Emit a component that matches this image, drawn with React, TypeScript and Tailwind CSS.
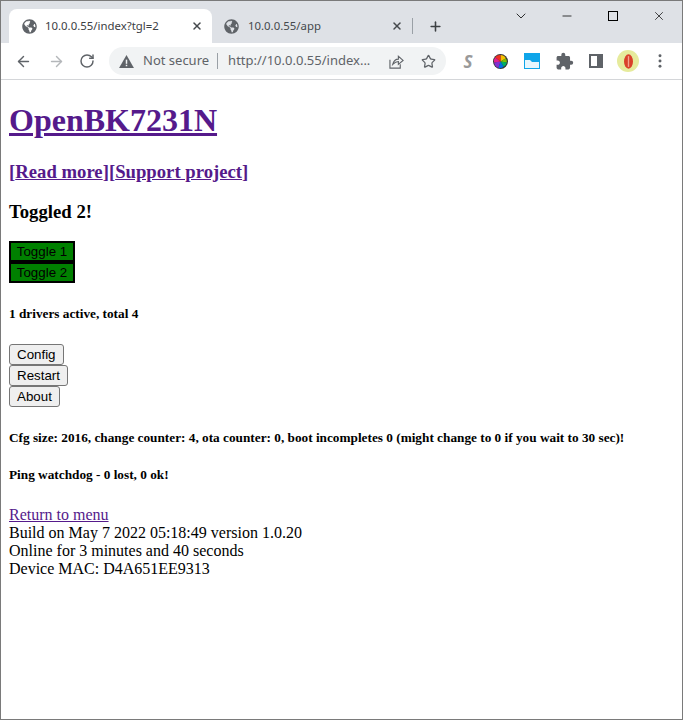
import { ArrowLeft, ArrowRight, RotateCw, Star, X, Plus, ChevronDown, Minus } from 'lucide-react'
import { FaGlobeAmericas } from 'react-icons/fa'
import { MdExtension } from 'react-icons/md'

const chrome = { fontFamily: '"Noto Sans", sans-serif' }

function Tab({ title, active }: { title: string; active?: boolean }) {
  return (
    <div className={`flex items-center h-[34px] pr-[9px] ${active ? 'w-[203px] pl-[13px] bg-white rounded-t-lg text-[#3c4043]' : 'w-[200px] pl-[12px] text-[#45494d]'}`}>
      <FaGlobeAmericas className="w-[15px] h-[15px] text-[#5f6368]" />
      <span className={`text-[11.4px] flex-1 ${active ? 'ml-[8px]' : 'ml-[9px]'}`}>{title}</span>
      <X className="w-[12px] h-[12px] text-[#45494d]" strokeWidth={3} />
    </div>
  )
}

function ExtensionIcons() {
  return (
    <div className="flex items-center ml-[12px]">
      <span className="w-[20px] text-center text-[17px] font-bold italic text-[#9a9a9a] leading-none">S</span>
      <svg viewBox="0 0 14 14" className="w-[15px] h-[15px] ml-[15px]">
        <circle cx="7" cy="7" r="7" fill="#333" />
        <path d="M7 7 L7 1 A6 6 0 0 1 12 4Z" fill="#f5c000" />
        <path d="M7 7 L12 4 A6 6 0 0 1 13 8Z" fill="#7ac000" />
        <path d="M7 7 L13 8 A6 6 0 0 1 10 12Z" fill="#00b060" />
        <path d="M7 7 L10 12 A6 6 0 0 1 5 13Z" fill="#0070e0" />
        <path d="M7 7 L5 13 A6 6 0 0 1 1 8Z" fill="#8030d0" />
        <path d="M7 7 L1 8 A6 6 0 0 1 2 3Z" fill="#e02090" />
        <path d="M7 7 L2 3 A6 6 0 0 1 7 1Z" fill="#f03020" />
      </svg>
      <svg viewBox="0 0 16 16" className="w-[16px] h-[16px] ml-[16px]">
        <rect width="16" height="16" fill="#0ea5e9" />
        <path d="M1 7 H6 L8 9 H15 V15 H1Z" fill="#e6f6fd" />
      </svg>
      <MdExtension className="w-[19px] h-[19px] text-[#5f6368] ml-[15px]" />
      <div className="w-[14px] h-[14px] border-[2px] border-[#5f6368] border-r-[6px] ml-[15px]" />
      <div className="w-[22px] h-[22px] rounded-full bg-[#e6eb9c] flex items-center justify-center ml-[14px]">
        <svg viewBox="0 0 10 16" className="w-[9px] h-[15px]">
          <ellipse cx="5" cy="8" rx="5" ry="8" fill="#d9402a" />
          <path d="M5 2 V14" stroke="#f3a08c" strokeWidth="1.5" />
        </svg>
      </div>
      <svg viewBox="0 0 4 16" className="w-[4px] h-[14px] ml-[19px]" fill="#5f6368">
        <circle cx="2" cy="2" r="1.7" />
        <circle cx="2" cy="8" r="1.7" />
        <circle cx="2" cy="14" r="1.7" />
      </svg>
    </div>
  )
}

function Browser() {
  return (
    <div style={chrome}>
      <div className="h-[42px] bg-[#dee1e6] flex items-end pl-[8px] relative">
        <Tab title="10.0.0.55/index?tgl=2" active />
        <Tab title="10.0.0.55/app" />
        <div className="flex items-center h-[34px]">
          <div className="w-px h-[16px] bg-[#9aa0a6]" />
          <Plus className="w-[15px] h-[15px] text-[#3c4043] ml-[15px]" strokeWidth={2.5} />
        </div>
        <div className="absolute right-0 top-0 flex items-center h-[30px] text-black">
          <ChevronDown className="w-[16px] h-[16px] mr-[31px]" strokeWidth={1.2} />
          <Minus className="w-[14px] h-[14px] mr-[34px]" strokeWidth={1.3} />
          <div className="w-[10px] h-[10px] border border-black mr-[34px]" />
          <X className="w-[14px] h-[14px] mr-[16px]" strokeWidth={1.2} />
        </div>
      </div>
      <div className="h-[37px] bg-white border-b border-[#d4d6d9] flex items-center pl-[14px]">
        <ArrowLeft className="w-[17px] h-[17px] text-[#5f6368]" strokeWidth={2} />
        <ArrowRight className="w-[17px] h-[17px] text-[#b4b7ba] ml-[16px]" strokeWidth={2} />
        <RotateCw className="w-[16px] h-[16px] text-[#5f6368] ml-[14px]" strokeWidth={2.2} />
        <div className="flex items-center h-[28px] w-[337px] rounded-full bg-[#f1f3f4] ml-[14px] pl-[10px]">
          <svg viewBox="0 0 16 14" className="w-[15px] h-[13px]" fill="#5f6368">
            <path d="M8 0 L16 14 H0Z" />
            <rect x="7.2" y="5" width="1.6" height="4.5" fill="#f1f3f4" />
            <rect x="7.2" y="10.5" width="1.6" height="1.6" fill="#f1f3f4" />
          </svg>
          <span className="text-[13px] text-[#5f6368] ml-[9px]">Not secure</span>
          <div className="w-px h-[16px] bg-[#9aa0a6] ml-[8px]" />
          <span className="text-[13px] text-[#5f6368] ml-[10px] w-[144px]">http://10.0.0.55/index...</span>
          <svg viewBox="0 0 16 16" className="w-[15px] h-[15px] ml-[17px]" fill="none" stroke="#5f6368" strokeWidth="1.2">
            <path d="M1 6 V15 H12 V11" />
            <path d="M4 11 C5 7 7 5.5 10 5.5 V2.5 L15 6.8 L10 11 V8 C8 8 6 9 4 11Z" />
          </svg>
          <Star className="w-[15px] h-[15px] text-[#5f6368] ml-[17px]" strokeWidth={2} />
        </div>
        <ExtensionIcons />
      </div>
    </div>
  )
}

const headingLink = 'text-[#551a8b] underline'
const grayButton = 'block h-[21px] px-[7px] bg-[#efefef] border border-[#767676] rounded-[3px] text-[13.33px] text-black'
const arial = { fontFamily: '"Liberation Sans", sans-serif' }

function DevicePage() {
  return (
    <div className="px-[8px] text-black text-base leading-[18px]" style={{ fontFamily: '"Liberation Serif", serif' }}>
      <h1 className="text-[32px] leading-[37px] font-bold pt-[22px]">
        <a className={headingLink}>OpenBK7231N</a>
      </h1>
      <h3 className="text-[18.72px] leading-[21px] font-bold mt-[22px] text-[#551a8b]">
        [<a className={headingLink}>Read more</a>][<a className={headingLink}>Support project</a>]
      </h3>
      <h3 className="text-[18.72px] leading-[21px] font-bold mt-[19px]">Toggled 2!</h3>
      <div className="mt-[19px] w-[66px]" style={arial}>
        <button className="block w-full h-[21px] bg-[#008000] border-2 border-black text-[13.33px] text-black">Toggle 1</button>
        <button className="block w-full h-[21px] bg-[#008000] border-2 border-black text-[13.33px] text-black">Toggle 2</button>
      </div>
      <h5 className="text-[13.28px] leading-[15px] font-bold mt-[23px]">1 drivers active, total 4</h5>
      <div className="mt-[23px]" style={arial}>
        <button className={grayButton}>Config</button>
        <button className={grayButton}>Restart</button>
        <button className={grayButton}>About</button>
      </div>
      <h5 className="text-[13.28px] leading-[15px] font-bold mt-[23px]">
        Cfg size: 2016, change counter: 4, ota counter: 0, boot incompletes 0 (might change to 0 if you wait to 30 sec)!
      </h5>
      <h5 className="text-[13.28px] leading-[15px] font-bold mt-[22px]">Ping watchdog - 0 lost, 0 ok!</h5>
      <div className="mt-[24px]">
        <a className={headingLink}>Return to menu</a>
        <div>Build on May 7 2022 05:18:49 version 1.0.20</div>
        <div>Online for 3 minutes and 40 seconds</div>
        <div>Device MAC: D4A651EE9313</div>
      </div>
    </div>
  )
}

export default function App() {
  return (
    <div className="w-[683px] h-[720px] bg-white border border-[#7a7a7a] overflow-hidden">
      <Browser />
      <DevicePage />
    </div>
  )
}
